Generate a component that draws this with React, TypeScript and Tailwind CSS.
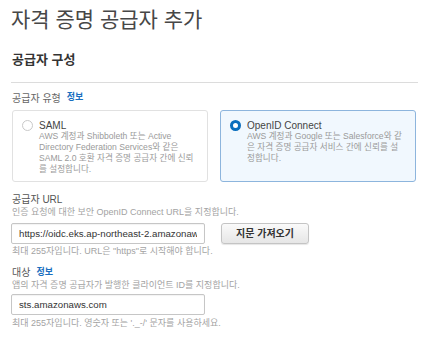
import React from "react";

const font = { fontFamily: '"Liberation Sans", Arial, "Noto Sans CJK KR", sans-serif' };

function Radio({ checked }: { checked?: boolean }) {
  return checked ? (
    <span className="block w-[11px] h-[11px] rounded-full border-[3px] border-[#0a6ebd] bg-white shrink-0" />
  ) : (
    <span className="block w-[11px] h-[11px] rounded-full border border-[#c9c9c9] bg-white shrink-0" />
  );
}

function OptionBox({
  checked,
  title,
  lines,
}: {
  checked?: boolean;
  title: string;
  lines: string[];
}) {
  return (
    <div
      className={
        "w-[196px] h-[72px] rounded-[3px] border pt-[8px] pl-[9px] flex overflow-hidden " +
        (checked ? "border-[#8db5dd] bg-[#f1f8fe]" : "border-[#e1e1e1] bg-white")
      }
    >
      <div className="w-[17px] shrink-0 pt-[1px]">
        <Radio checked={checked} />
      </div>
      <div className="min-w-0">
        <div className="text-[10px] leading-[13px] text-[#444]">{title}</div>
        <div className="text-[8.6px] leading-[11px] text-[#9a9a9a] mt-[-1px]">
          {lines.map((l, i) => (
            <div key={i} className="whitespace-nowrap">
              {l}
            </div>
          ))}
        </div>
      </div>
    </div>
  );
}

export default function App() {
  return (
    <div className="w-[426px] h-[337px] bg-white overflow-hidden" style={font}>
      <div className="pl-[11px] pr-[8px]">
        <h1 className="mt-[7px] text-[21px] leading-[26px] text-[#474747] font-normal">
          자격 증명 공급자 추가
        </h1>
        <h2 className="mt-[19px] ml-[1px] text-[13px] leading-[16px] font-bold text-[#333]">
          공급자 구성
        </h2>
        <div className="mt-[14px] border-t border-[#dcdcdc] w-[407px]" />
        <div className="mt-[8px] ml-[1px] flex items-center gap-[6px] h-[14px]">
          <span className="text-[10px] text-[#666]">공급자 유형</span>
          <span className="text-[9px] font-bold text-[#1a6fbf]">정보</span>
        </div>
        <div className="mt-[5px] ml-[1px] flex gap-[12px]">
          <OptionBox
            title="SAML"
            lines={[
              "AWS 계정과 Shibboleth 또는 Active",
              "Directory Federation Services와 같은",
              "SAML 2.0 호환 자격 증명 공급자 간에 신뢰",
              "를 설정합니다.",
            ]}
          />
          <OptionBox
            checked
            title="OpenID Connect"
            lines={[
              "AWS 계정과 Google 또는 Salesforce와 같",
              "은 자격 증명 공급자 서비스 간에 신뢰를 설",
              "정합니다.",
            ]}
          />
        </div>

        <div className="mt-[11px] ml-[1px] text-[10px] leading-[13px] text-[#555]">공급자 URL</div>
        <div className="ml-[1px] text-[9px] leading-[12px] text-[#a3a3a3] whitespace-nowrap">
          인증 요청에 대한 보안 OpenID Connect URL을 지정합니다.
        </div>
        <div className="mt-[5px] flex items-center gap-[16px]">
          <input
            readOnly
            value="https://oidc.eks.ap-northeast-2.amazonaws.com/id/EXAMPLE"
            className="w-[194px] h-[21px] border border-[#c6c6c6] rounded-[2px] px-[7px] text-[9.7px] text-[#333] outline-none shadow-[inset_0_1px_1px_rgba(0,0,0,0.05)]"
            style={font}
          />
          <button className="w-[88px] h-[21px] rounded-[3px] border border-[#c4c4c4] bg-gradient-to-b from-[#fafafa] to-[#e6e6e6] text-[10px] font-bold text-[#333] shadow-[0_1px_1px_rgba(0,0,0,0.1)]">
            지문 가져오기
          </button>
        </div>
        <div className="mt-[1px] ml-[1px] text-[9px] leading-[12px] text-[#a3a3a3] whitespace-nowrap">
          최대 255자입니다. URL은 "https"로 시작해야 합니다.
        </div>

        <div className="mt-[9px] ml-[1px] flex items-center gap-[6px] h-[13px]">
          <span className="text-[10px] text-[#555]">대상</span>
          <span className="text-[9px] font-bold text-[#1a6fbf]">정보</span>
        </div>
        <div className="ml-[1px] text-[9px] leading-[12px] text-[#a3a3a3] whitespace-nowrap">
          앱의 자격 증명 공급자가 발행한 클라이언트 ID를 지정합니다.
        </div>
        <input
          readOnly
          value="sts.amazonaws.com"
          className="block mt-[3px] w-[194px] h-[21px] border border-[#c6c6c6] rounded-[2px] px-[7px] text-[9.7px] text-[#333] outline-none shadow-[inset_0_1px_1px_rgba(0,0,0,0.05)]"
          style={font}
        />
        <div className="mt-[2px] ml-[1px] text-[9px] leading-[12px] text-[#a3a3a3] whitespace-nowrap">
          최대 255자입니다. 영숫자 또는 '._-/' 문자를 사용하세요.
        </div>
      </div>
    </div>
  );
}
